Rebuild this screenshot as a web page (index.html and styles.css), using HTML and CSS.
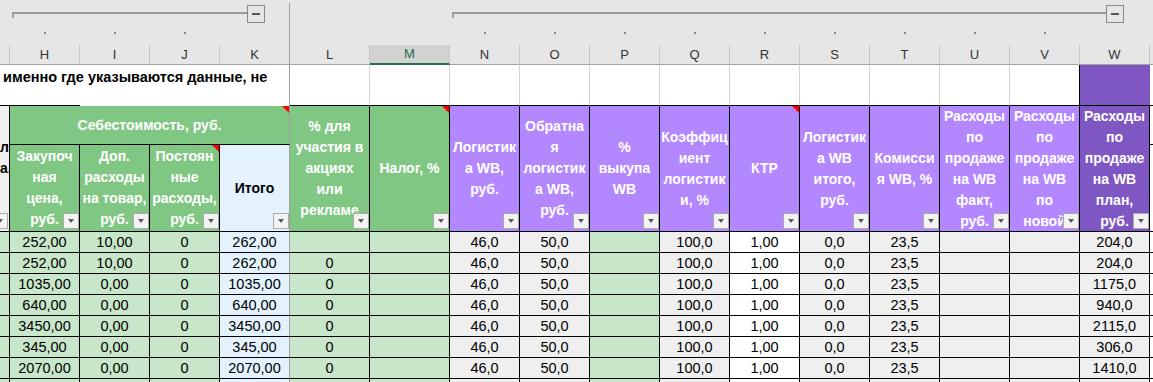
FILE: index.html
```html
<!DOCTYPE html>
<html lang="ru">
<head>
    <meta charset="UTF-8">
    <title>Юнит-экономика WB</title>
    <link rel="stylesheet" href="styles.css">
</head>
<body>
    <!-- группировка столбцов -->
    <div class="cols outline-top">
        <div></div>
        <div class="bracket bracket-h"><span class="line"></span><span class="box"></span></div>
        <div></div>
        <div></div>
        <div class="bracket bracket-n"><span class="line"></span><span class="box"></span></div>
        <div></div>
    </div>
    <div class="cols outline-dots">
        <div></div>
        <div class="dot"></div><div class="dot"></div><div class="dot"></div>
        <div class="fz-line"></div>
        <div></div><div></div>
        <div class="dot"></div><div class="dot"></div><div class="dot"></div>
        <div class="dot"></div><div class="dot"></div><div class="dot"></div>
        <div class="dot"></div><div class="dot"></div><div class="dot"></div>
        <div></div><div></div>
    </div>

    <!-- заголовки столбцов -->
    <div class="cols heads">
        <div class="hc"></div>
        <div class="hc">H</div>
        <div class="hc">I</div>
        <div class="hc">J</div>
        <div class="hc fz">K</div>
        <div class="hc">L</div>
        <div class="hc sel">M</div>
        <div class="hc">N</div>
        <div class="hc">O</div>
        <div class="hc">P</div>
        <div class="hc">Q</div>
        <div class="hc">R</div>
        <div class="hc">S</div>
        <div class="hc">T</div>
        <div class="hc">U</div>
        <div class="hc">V</div>
        <div class="hc">W</div>
        <div class="hc last"></div>
    </div>

    <div class="cols sheet">
        <!-- строка 1 -->
        <div class="c r1-text">именно где указываются данные, не</div>
        <div class="c r1"></div>
        <div class="c r1"></div>
        <div class="c r1"></div>
        <div class="c r1"></div>
        <div class="c r1"></div>
        <div class="c r1"></div>
        <div class="c r1"></div>
        <div class="c r1"></div>
        <div class="c r1"></div>
        <div class="c r1"></div>
        <div class="c r1 edge"></div>
        <div class="c r1 dark"></div>
        <div class="c r1 last"></div>

        <!-- шапка таблицы -->
        <div class="c h cut tall"><span class="t"><span class="l1">л</span><span class="l2">а,</span><span>&nbsp;</span></span><span class="flt"></span></div>
        <div class="c h hg sebe fz"><span class="t">Себестоимость, руб.</span><span class="note"></span></div>
        <div class="c h hg tall"><span class="t">% для<br>участия в<br>акциях<br>или<br>рекламе</span><span class="flt"></span></div>
        <div class="c h hg tall"><span class="t">Налог, %</span><span class="note"></span><span class="flt"></span></div>
        <div class="c h hp tall"><span class="t">Логистик<br>а WB,<br>руб.</span><span class="flt"></span></div>
        <div class="c h hp tall"><span class="t">Обратна<br>я<br>логистик<br>а WB,<br>руб.</span><span class="flt"></span></div>
        <div class="c h hp tall"><span class="t">%<br>выкупа<br>WB</span><span class="flt"></span></div>
        <div class="c h hp tall"><span class="t">Коэффиц<br>иент<br>логистик<br>и, %</span><span class="flt"></span></div>
        <div class="c h hp tall"><span class="t">КТР</span><span class="note"></span><span class="flt"></span></div>
        <div class="c h hp tall"><span class="t">Логистик<br>а WB<br>итого,<br>руб.</span><span class="flt"></span></div>
        <div class="c h hp tall"><span class="t">Комисси<br>я WB, %</span><span class="flt"></span></div>
        <div class="c h hp tall"><span class="t">Расходы<br>по<br>продаже<br>на WB<br>факт,<br>руб.</span><span class="flt"></span></div>
        <div class="c h hp tall"><span class="t">Расходы<br>по<br>продаже<br>на WB<br>по<br>новой</span><span class="flt"></span></div>
        <div class="c h hpd tall"><span class="t">Расходы<br>по<br>продаже<br>на WB<br>план,<br>руб.</span><span class="flt"></span></div>
        <div class="c last"></div>

        <div class="c h hg"><span class="t">Закупоч<br>ная<br>цена,<br>руб.</span><span class="flt"></span></div>
        <div class="c h hg"><span class="t">Доп.<br>расходы<br>на товар,<br>руб.</span><span class="flt"></span></div>
        <div class="c h hg"><span class="t">Постоян<br>ные<br>расходы,<br>руб.</span><span class="note"></span><span class="flt"></span></div>
        <div class="c h hb fz"><span class="t">Итого</span><span class="flt"></span></div>
        <div class="c last"></div>

        <!-- данные -->
        <div class="c g"></div><div class="c g">252,00</div><div class="c g">10,00</div><div class="c g">0</div><div class="c b fz">262,00</div><div class="c g"></div><div class="c g"></div><div class="c e">46,0</div><div class="c e">50,0</div><div class="c g"></div><div class="c e">100,0</div><div class="c w">1,00</div><div class="c e">0,0</div><div class="c e">23,5</div><div class="c e"></div><div class="c e"></div><div class="c e">204,0</div><div class="c w last"></div>

        <div class="c g"></div><div class="c g">252,00</div><div class="c g">10,00</div><div class="c g">0</div><div class="c b fz">262,00</div><div class="c g">0</div><div class="c g"></div><div class="c e">46,0</div><div class="c e">50,0</div><div class="c g"></div><div class="c e">100,0</div><div class="c w">1,00</div><div class="c e">0,0</div><div class="c e">23,5</div><div class="c e"></div><div class="c e"></div><div class="c e">204,0</div><div class="c w last"></div>

        <div class="c g"></div><div class="c g">1035,00</div><div class="c g">0,00</div><div class="c g">0</div><div class="c b fz">1035,00</div><div class="c g">0</div><div class="c g"></div><div class="c e">46,0</div><div class="c e">50,0</div><div class="c g"></div><div class="c e">100,0</div><div class="c w">1,00</div><div class="c e">0,0</div><div class="c e">23,5</div><div class="c e"></div><div class="c e"></div><div class="c e">1175,0</div><div class="c w last"></div>

        <div class="c g"></div><div class="c g">640,00</div><div class="c g">0,00</div><div class="c g">0</div><div class="c b fz">640,00</div><div class="c g">0</div><div class="c g"></div><div class="c e">46,0</div><div class="c e">50,0</div><div class="c g"></div><div class="c e">100,0</div><div class="c w">1,00</div><div class="c e">0,0</div><div class="c e">23,5</div><div class="c e"></div><div class="c e"></div><div class="c e">940,0</div><div class="c w last"></div>

        <div class="c g"></div><div class="c g">3450,00</div><div class="c g">0,00</div><div class="c g">0</div><div class="c b fz">3450,00</div><div class="c g">0</div><div class="c g"></div><div class="c e">46,0</div><div class="c e">50,0</div><div class="c g"></div><div class="c e">100,0</div><div class="c w">1,00</div><div class="c e">0,0</div><div class="c e">23,5</div><div class="c e"></div><div class="c e"></div><div class="c e">2115,0</div><div class="c w last"></div>

        <div class="c g"></div><div class="c g">345,00</div><div class="c g">0,00</div><div class="c g">0</div><div class="c b fz">345,00</div><div class="c g">0</div><div class="c g"></div><div class="c e">46,0</div><div class="c e">50,0</div><div class="c g"></div><div class="c e">100,0</div><div class="c w">1,00</div><div class="c e">0,0</div><div class="c e">23,5</div><div class="c e"></div><div class="c e"></div><div class="c e">306,0</div><div class="c w last"></div>

        <div class="c g"></div><div class="c g">2070,00</div><div class="c g">0,00</div><div class="c g">0</div><div class="c b fz">2070,00</div><div class="c g">0</div><div class="c g"></div><div class="c e">46,0</div><div class="c e">50,0</div><div class="c g"></div><div class="c e">100,0</div><div class="c w">1,00</div><div class="c e">0,0</div><div class="c e">23,5</div><div class="c e"></div><div class="c e"></div><div class="c e">1410,0</div><div class="c w last"></div>

        <div class="c g"></div><div class="c g"></div><div class="c g"></div><div class="c g"></div><div class="c b fz"></div><div class="c g"></div><div class="c g"></div><div class="c e"></div><div class="c e"></div><div class="c g"></div><div class="c e"></div><div class="c w"></div><div class="c e"></div><div class="c e"></div><div class="c e"></div><div class="c e"></div><div class="c e"></div><div class="c w last"></div>
    </div>
</body>
</html>
```

FILE: styles.css
```css
body {
    margin: 0;
    width: 1153px;
    height: 382px;
    overflow: hidden;
    background: #fff;
    font-family: "Liberation Sans", Arial, sans-serif;
}
.cols {
    display: grid;
    grid-template-columns: 10px 70px 70px 70px 70px 80px 80px repeat(10, 70px) 3px;
}

/* группировка */
.outline-top {
    height: 24px;
    background: #e6e6e6;
}
.outline-dots {
    height: 21px;
    background: #e6e6e6;
}
.bracket {
    display: flex;
    align-items: flex-start;
    padding-top: 5px;
    padding-left: 2px;
    box-sizing: border-box;
}
.bracket-h {
    grid-column: span 4;
    margin-top: 3px;
    padding-top: 2px;
    padding-right: 24px;
    border-right: 1px solid #9e9e9e;
}
.bracket-n {
    grid-column: span 10;
    padding-right: 26px;
}
.bracket .line {
    flex: 1;
    height: 6px;
    margin-top: 7px;
    border-top: 2px solid #9a9a9a;
    border-left: 2px solid #9a9a9a;
    box-sizing: border-box;
}
.bracket .box {
    width: 18px;
    height: 18px;
    border: 1px solid #8a8a8a;
    box-sizing: border-box;
    display: flex;
    align-items: center;
    justify-content: center;
}
.bracket .box::before {
    content: "";
    width: 8px;
    height: 2px;
    background: #555;
}
.dot {
    display: flex;
    justify-content: center;
}
.dot::after {
    content: "";
    width: 2px;
    height: 2px;
    margin-top: 8px;
    background: #8a8a8a;
}
.fz-line {
    border-right: 1px solid #9e9e9e;
}

/* буквы столбцов */
.heads {
    background: #e6e6e6;
}
.hc {
    height: 20px;
    box-sizing: border-box;
    border-right: 1px solid #c6c6c6;
    border-bottom: 1px solid #a3a3a3;
    font-size: 13px;
    line-height: 19px;
    text-align: center;
    color: #333;
}
.hc.fz {
    border-right-color: #9e9e9e;
}
.hc.sel {
    background: #d2d2d2;
    color: #217346;
    border-bottom: 2px solid #217346;
    line-height: 18px;
}
.hc.last {
    border-right: none;
}

/* лист */
.sheet {
    grid-template-rows: 41px 39px 87px repeat(8, 21px);
}
.c {
    position: relative;
    overflow: hidden;
    box-sizing: border-box;
    border-right: 1px solid #000;
    border-bottom: 1px solid #000;
    font-size: 14.5px;
    line-height: 20px;
    text-align: center;
    color: #000;
}
.c.fz {
    border-right-color: #9e9e9e;
}
.c.last {
    border-right: none;
}
.r1-text {
    grid-column: span 5;
    border-bottom: none;
    border-right-color: #9e9e9e;
    background: linear-gradient(#000, #000) 0 100% / 80px 1px no-repeat, #fff;
    padding: 2px 0 0 3px;
    font-size: 14.5px;
    font-weight: bold;
    line-height: 21px;
    text-align: left;
    white-space: nowrap;
}
.r1 {
    border-right-color: #d4d4d4;
}
.r1.edge {
    border-right-color: #000;
}
.r1.dark {
    background: #7e57c2;
    border-right: none;
}

/* шапка */
.h {
    display: flex;
    flex-direction: column;
    justify-content: center;
    align-items: center;
    font-size: 14px;
    font-weight: bold;
    line-height: 21px;
    color: #fff;
    white-space: nowrap;
}
.tall {
    grid-row: span 2;
}
.sebe {
    grid-column: span 4;
}
.hg {
    background: #81c784;
}
.hp {
    background: #b388ff;
}
.hpd {
    background: #7e57c2;
}
.hb {
    background: #e3f2fd;
    color: #000;
}
.cut {
    background: #f0f0f0;
    color: #000;
    align-items: stretch;
}
.cut .t span {
    display: block;
    text-align: right;
}
.cut .l1 {
    padding-right: 5px;
}
.cut .l2 {
    padding-right: 1px;
}
.flt {
    position: absolute;
    right: 0;
    bottom: 2px;
    width: 16px;
    height: 16px;
    box-sizing: border-box;
    border: 1px solid #ababab;
    background: #f3f3f3;
}
.cut .flt {
    right: 1px;
}
.flt::after {
    content: "";
    position: absolute;
    left: 4px;
    top: 5px;
    border-left: 3.5px solid transparent;
    border-right: 3.5px solid transparent;
    border-top: 4px solid #5a5a5a;
}
.note {
    position: absolute;
    top: 0;
    right: 0;
    width: 0;
    height: 0;
    border-left: 7px solid transparent;
    border-top: 7px solid #f00;
}

/* данные */
.g {
    background: #c8e6c9;
}
.b {
    background: #e3f2fd;
}
.e {
    background: #efefef;
}
.w {
    background: #fff;
}
```
